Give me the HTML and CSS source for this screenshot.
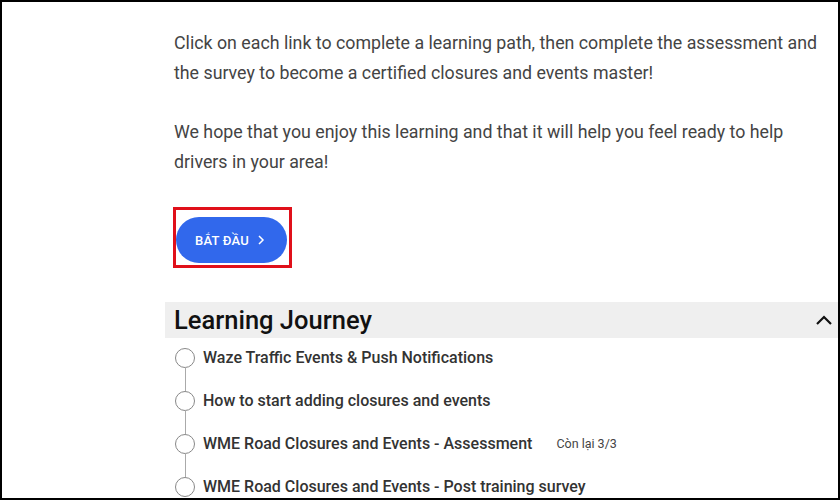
FILE: index.html
```html
<html>
  <head>
    <link rel="stylesheet" href="styles.css">
    <title>Closures and Events</title>
  </head>
  <body>
    <div class="frame">
      <div class="content">
        <p class="intro cut">Select any course you enjoy, in any order, and keep going through each learning path to get ready.</p>

        <p class="intro">Click on each link to complete a learning path, then complete the assessment and
          the survey to become a certified closures and events master!</p>

        <p class="intro">We hope that you enjoy this learning and that it will help you feel ready to help
          drivers in your area!</p>

        <div class="highlight">
          <button class="start">BẮT ĐẦU
            <svg width="10" height="12" viewBox="0 0 10 12"><polyline points="3,2 7,6 3,10" fill="none" stroke="#fff" stroke-width="1.5"/></svg>
          </button>
        </div>

        <div class="journey-head">
          <h2>Learning Journey</h2>
          <svg class="chevron" width="18" height="12" viewBox="0 0 18 12"><polyline points="2,10 9,3 16,10" fill="none" stroke="#111" stroke-width="2.2"/></svg>
        </div>

        <ul class="steps">
          <li><span class="dot"></span>Waze Traffic Events &amp; Push Notifications</li>
          <li><span class="dot"></span>How to start adding closures and events</li>
          <li><span class="dot"></span>WME Road Closures and Events - Assessment <span class="left">Còn lại 3/3</span></li>
          <li><span class="dot"></span>WME Road Closures and Events - Post training survey</li>
        </ul>
      </div>
    </div>
  </body>
</html>
```
FILE: styles.css
```css
body {
    margin: 0;
    font-family: Roboto, "Liberation Sans", sans-serif;
    background-color: #fff;
}

.frame {
    width: 840px;
    height: 500px;
    box-sizing: border-box;
    border: 2px solid #000;
    overflow: hidden;
}

.content {
    margin-left: 163px;
}

/* Paragraphs */
.intro {
    margin: 0 0 29px 0;
    padding-left: 9px;
    font-size: 17.8px;
    line-height: 30px;
    color: #444;
    width: 662px;
}

.cut {
    margin-top: -25px;
    margin-bottom: 21px;
    white-space: nowrap;
    overflow: hidden;
    color: #777;
}

/* Start button, with the red mark around it */
.highlight {
    display: inline-block;
    margin: 1px 0 0 8px;
    padding: 7px 2px 2px 0;
    border: 3px solid #e0101a;
}

.start {
    display: flex;
    align-items: center;
    gap: 7px;
    height: 46px;
    padding: 0 21px 0 19px;
    border: none;
    border-radius: 23px;
    background-color: #3168ec;
    color: #fff;
    font-family: Roboto, "Liberation Sans", sans-serif;
    font-size: 13px;
    font-weight: 500;
    letter-spacing: 0.2px;
}

/* Learning journey */
.journey-head {
    display: flex;
    align-items: center;
    justify-content: space-between;
    margin-top: 34px;
    height: 36px;
    padding: 0 5px 0 9px;
    background-color: #efefef;
}

.journey-head h2 {
    margin: 0;
    font-size: 25.5px;
    font-weight: 500;
    color: #111;
}

.steps {
    list-style: none;
    margin: -2px 0 0 0;
    padding: 0 0 0 10px;
}

.steps li {
    position: relative;
    display: flex;
    align-items: center;
    height: 43px;
    font-size: 16px;
    font-weight: 500;
    color: #333;
}

.steps li:not(:last-child)::before {
    content: "";
    position: absolute;
    left: 10px;
    top: 31px;
    height: 24px;
    border-left: 1px solid #aaa;
}

.dot {
    width: 18px;
    height: 18px;
    border: 1px solid #888;
    border-radius: 50%;
    margin-right: 8px;
    flex-shrink: 0;
}

.left {
    margin-left: 24px;
    font-size: 12.5px;
    font-weight: 400;
    color: #444;
}
```
